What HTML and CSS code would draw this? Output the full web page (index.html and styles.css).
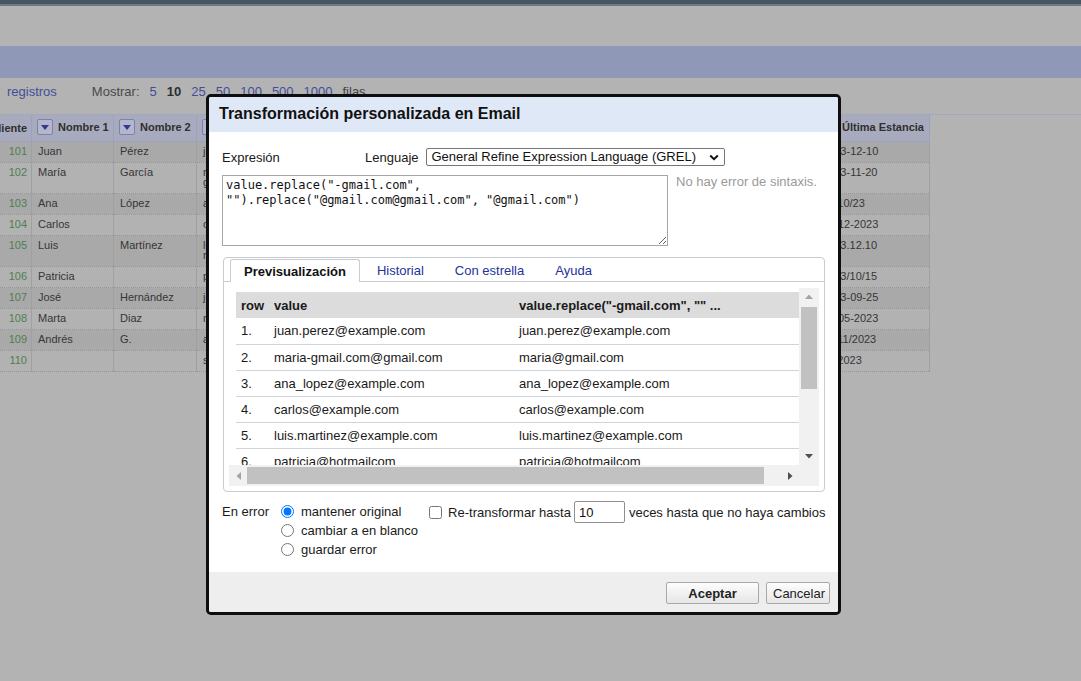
FILE: index.html
```html
<!DOCTYPE html>
<html lang="es">
<head>
<meta charset="utf-8">
<title>OpenRefine - Transformación personalizada</title>
<link rel="stylesheet" href="styles.css">
</head>
<body>
<div class="page">
  <div class="topbar"></div>
  <div class="appbar"></div>
  <div class="band"></div>
  <div class="controls">
    <a class="lnk">registros</a>
    <span class="show">Mostrar:</span>
    <a class="lnk pg">5</a>
    <b class="pg cur">10</b>
    <a class="lnk pg">25</a>
    <a class="lnk pg">50</a>
    <a class="lnk pg">100</a>
    <a class="lnk pg">500</a>
    <a class="lnk pg">1000</a>
    <span class="pg plain">filas</span>
  </div>
  <div class="grid-wrap">
    <table class="data">
      <colgroup>
        <col class="c-id"><col class="c-n1"><col class="c-n2"><col class="c-em"><col class="c-e"><col class="c-f"><col class="c-g">
      </colgroup>
      <thead>
        <tr>
          <th class="num-h">ID Cliente</th>
          <th><span class="dd"><svg width="16" height="16" viewBox="0 0 16 16"><polygon points="4,6 12,6 8,11" fill="#333a8e"/></svg></span>Nombre 1</th>
          <th><span class="dd"><svg width="16" height="16" viewBox="0 0 16 16"><polygon points="4,6 12,6 8,11" fill="#333a8e"/></svg></span>Nombre 2</th>
          <th><span class="dd"><svg width="16" height="16" viewBox="0 0 16 16"><polygon points="4,6 12,6 8,11" fill="#333a8e"/></svg></span>Email</th>
          <th><span class="dd"><svg width="16" height="16" viewBox="0 0 16 16"><polygon points="4,6 12,6 8,11" fill="#333a8e"/></svg></span>Teléfono</th>
          <th><span class="dd"><svg width="16" height="16" viewBox="0 0 16 16"><polygon points="4,6 12,6 8,11" fill="#333a8e"/></svg></span>Ciudad</th>
          <th><span class="dd"><svg width="16" height="16" viewBox="0 0 16 16"><polygon points="4,6 12,6 8,11" fill="#333a8e"/></svg></span>Última Estancia</th>
        </tr>
      </thead>
      <tbody>
        <tr class="odd"><td class="num">101</td><td>Juan</td><td>Pérez</td><td>juan.perez@example.com</td><td>555-1234</td><td>Madrid</td><td>2023-12-10</td></tr>
        <tr class="even"><td class="num">102</td><td>María</td><td>García</td><td>maria-gmail.com<br>gmail.com</td><td>555-2345</td><td>Sevilla</td><td>2023-11-20</td></tr>
        <tr class="odd"><td class="num">103</td><td>Ana</td><td>López</td><td>ana_lopez@example.com</td><td>555-3456</td><td>Valencia</td><td>23/10/23</td></tr>
        <tr class="even"><td class="num">104</td><td>Carlos</td><td></td><td>carlos@example.com</td><td>555-4567</td><td>Bilbao</td><td>12-12-2023</td></tr>
        <tr class="odd"><td class="num">105</td><td>Luis</td><td>Martínez</td><td>luis.<br>martinez@example.com</td><td>555-5678</td><td>Málaga</td><td>2023.12.10</td></tr>
        <tr class="even"><td class="num">106</td><td>Patricia</td><td></td><td>patricia@hotmailcom</td><td>555-6789</td><td>Zaragoza</td><td>2023/10/15</td></tr>
        <tr class="odd"><td class="num">107</td><td>José</td><td>Hernández</td><td>jose.hernandez@example.com</td><td>555-7890</td><td>Murcia</td><td>2023-09-25</td></tr>
        <tr class="even"><td class="num">108</td><td>Marta</td><td>Diaz</td><td>marta.diaz@example.com</td><td>555-8901</td><td>Cádiz</td><td>15-05-2023</td></tr>
        <tr class="odd"><td class="num">109</td><td>Andrés</td><td>G.</td><td>andres.g@example.com</td><td>555-9012</td><td>Toledo</td><td>01/11/2023</td></tr>
        <tr class="even"><td class="num">110</td><td></td><td></td><td>sin-nombre@example.com</td><td></td><td></td><td>12/2023</td></tr>
      </tbody>
    </table>
  </div>
</div>

<div class="dialog" role="dialog">
  <div class="dlg-head">Transformación personalizada en Email</div>
  <div class="dlg-body">
    <div class="row1">
      <span class="lbl-expr">Expresión</span>
      <span class="lbl-lang">Lenguaje</span>
      <div class="select">
        <span>General Refine Expression Language (GREL)</span>
        <svg width="10" height="7" viewBox="0 0 10 7"><polyline points="1.2,1.5 5,5.2 8.8,1.5" fill="none" stroke="#111" stroke-width="2"/></svg>
      </div>
    </div>
    <div class="row2">
      <textarea class="expr" spellcheck="false">value.replace("-gmail.com", "").replace("@gmail.com@gmail.com", "@gmail.com")</textarea>
      <div class="status">No hay error de sintaxis.</div>
    </div>
    <div class="tabs">
      <div class="tabnav">
        <span class="tab active">Previsualización</span>
        <span class="tab">Historial</span>
        <span class="tab">Con estrella</span>
        <span class="tab">Ayuda</span>
      </div>
      <div class="panel">
        <div class="scroller">
          <div class="view">
            <table class="ptable">
              <colgroup><col class="p-row"><col class="p-val"><col class="p-new"></colgroup>
              <thead>
                <tr><th>row</th><th>value</th><th>value.replace("-gmail.com", "" ...</th></tr>
              </thead>
              <tbody>
                <tr><td>1.</td><td>juan.perez@example.com</td><td>juan.perez@example.com</td></tr>
                <tr><td>2.</td><td>maria-gmail.com@gmail.com</td><td>maria@gmail.com</td></tr>
                <tr><td>3.</td><td>ana_lopez@example.com</td><td>ana_lopez@example.com</td></tr>
                <tr><td>4.</td><td>carlos@example.com</td><td>carlos@example.com</td></tr>
                <tr><td>5.</td><td>luis.martinez@example.com</td><td>luis.martinez@example.com</td></tr>
                <tr><td>6.</td><td>patricia@hotmailcom</td><td>patricia@hotmailcom</td></tr>
                <tr><td>7.</td><td>jose.hernandez@example.com</td><td>jose.hernandez@example.com</td></tr>
                <tr><td>8.</td><td>marta.diaz@example.com</td><td>marta.diaz@example.com</td></tr>
              </tbody>
            </table>
          </div>
          <div class="vbar">
            <div class="sb-btn"><svg width="8" height="5" viewBox="0 0 8 5"><polygon points="0,5 4,0.5 8,5" fill="#a3a3a3"/></svg></div>
            <div class="vtrack"><div class="vthumb"></div></div>
            <div class="sb-btn"><svg width="8" height="5" viewBox="0 0 8 5"><polygon points="0,0 8,0 4,4.5" fill="#505050"/></svg></div>
          </div>
          <div class="hbar">
            <div class="sb-btn"><svg width="5" height="8" viewBox="0 0 5 8"><polygon points="5,0 5,8 0.5,4" fill="#a3a3a3"/></svg></div>
            <div class="htrack"><div class="hthumb"></div></div>
            <div class="sb-btn"><svg width="5" height="8" viewBox="0 0 5 8"><polygon points="0,0 0,8 4.5,4" fill="#505050"/></svg></div>
          </div>
          <div class="corner"></div>
        </div>
      </div>
    </div>
    <div class="opts">
      <span class="lbl-err">En error</span>
      <div class="radios">
        <label><input type="radio" name="onerror" checked>mantener original</label>
        <label><input type="radio" name="onerror">cambiar a en blanco</label>
        <label><input type="radio" name="onerror">guardar error</label>
      </div>
      <div class="retrans">
        <input type="checkbox">
        <span>Re-transformar hasta</span>
        <input class="times" type="text" value="10">
        <span>veces hasta que no haya cambios</span>
      </div>
    </div>
  </div>
  <div class="dlg-foot">
    <button class="btn primary">Aceptar</button>
    <button class="btn cancel">Cancelar</button>
  </div>
</div>
</body>
</html>
```

FILE: styles.css
```css
* { box-sizing: border-box; }
html, body { margin: 0; padding: 0; }
body {
  width: 1081px;
  height: 681px;
  overflow: hidden;
  position: relative;
  background: #b3b3b3;
  font-family: "Liberation Sans", Arial, sans-serif;
  color: #333;
}

/* ---------- background page (dimmed) ---------- */
.topbar { height: 6px; background: #47565f; border-bottom: 2px solid #6d7b83; }
.appbar { height: 40px; }
.band { height: 32px; background: #8f99b7; }
.controls {
  height: 36px;
  padding: 6px 0 0 7px;
  font-size: 13px;
  line-height: 16px;
  display: flex;
  align-items: flex-start;
}
.lnk { color: #434e9a; text-decoration: none; }
.show { margin-left: 35px; color: #4a4a4a; }
.pg { margin-left: 10px; }
.pg.cur { font-weight: bold; color: #2e2e2e; }
.pg.plain { color: #444; }

.grid-wrap { overflow: hidden; border-top: 1px solid #a3a8c0; }
.data {
  border-collapse: collapse;
  table-layout: fixed;
  width: 961px;
  margin-left: -32px;
  font-size: 11px;
  color: #363636;
}
.c-id { width: 63px; }
.c-n1 { width: 82px; }
.c-n2 { width: 83px; }
.c-em { width: 210px; }
.c-e { width: 206px; }
.c-f { width: 203px; }
.c-g { width: 114px; }
.data th {
  height: 26px;
  padding: 0 5px;
  background: #a7abbd;
  border: 1px solid #9ca1bc;
  border-top: 0;
  text-align: left;
  font-weight: bold;
  white-space: nowrap;
  overflow: hidden;
  color: #2f2f2f;
}
.data th.num-h { text-align: right; padding-right: 4px; }
.dd {
  display: inline-block;
  width: 16px;
  height: 16px;
  vertical-align: middle;
  margin: -2px 5px 0 0;
  border: 1px solid #7c81ae;
  border-radius: 2px;
  background: #b4b7cb;
}
.dd svg { display: block; margin: -1px 0 0 -1px; }
.data td {
  padding: 4px 6px 6px;
  line-height: 10px;
  border-bottom: 1px dotted #959595;
  border-left: 1px solid #a0a0a0;
  border-right: 1px solid #a0a0a0;
  vertical-align: top;
  white-space: nowrap;
  overflow: hidden;
}
.data tr.odd td { background: #a9a9a9; }
.data tr.even td { background: #b2b2b2; }
.data td.num { text-align: right; padding-right: 4px; color: #4f7f4f; }

/* ---------- dialog ---------- */
.dialog {
  position: absolute;
  left: 206px;
  top: 94px;
  width: 635px;
  height: 521px;
  border: 3px solid #0e0e0e;
  border-radius: 5px;
  background: #fff;
  display: flex;
  flex-direction: column;
  overflow: hidden;
  color: #1a1a1a;
  font-size: 13px;
}
.dlg-head {
  height: 35px;
  flex: none;
  background: #dfe8f6;
  padding: 0 0 2px 10px;
  display: flex;
  align-items: center;
  font-size: 16px;
  font-weight: bold;
  color: #111;
}
.dlg-body { flex: 1; padding: 16px 13px 0; }

.row1 { display: flex; align-items: center; height: 18px; white-space: nowrap; }
.lbl-expr { width: 143px; flex: none; }
.lbl-lang { margin-right: 7px; }
.select {
  width: 299px;
  height: 18px;
  flex: none;
  border: 1px solid #767676;
  border-radius: 2px;
  display: flex;
  align-items: center;
  justify-content: space-between;
  padding: 0 5px;
  line-height: 16px;
  color: #111;
}

.row2 { display: flex; gap: 8px; margin-top: 9px; }
.expr {
  width: 446px;
  height: 71px;
  flex: none;
  margin: 0;
  font-family: "DejaVu Sans Mono", "Liberation Mono", monospace;
  font-size: 12px;
  line-height: 15px;
  padding: 2px 3px;
  border: 1px solid #a6a6a6;
  border-radius: 0;
  color: #111;
  resize: both;
}
.status { color: #9a9a9a; line-height: 14px; white-space: nowrap; }

.tabs {
  margin: 11px 0 0 1px;
  width: 602px;
  height: 235px;
  border: 1px solid #c8cbd0;
  border-radius: 4px;
  display: flex;
  flex-direction: column;
}
.tabnav {
  display: flex;
  align-items: flex-start;
  height: 24px;
  padding: 1px 0 0 6px;
  border-bottom: 1px solid #c8cbd0;
  flex: none;
  white-space: nowrap;
}
.tab {
  height: 22px;
  padding: 0 13px;
  margin-right: 3px;
  display: flex;
  align-items: center;
  color: #22339a;
  border: 1px solid transparent;
  border-bottom: 0;
  border-radius: 3px 3px 0 0;
}
.tab.active {
  height: 23px;
  margin-bottom: -1px;
  border-color: #c8cbd0;
  background: #fff;
  font-weight: bold;
  color: #111;
}
.panel { flex: 1; padding: 6px 5px 5px; }
.scroller {
  display: grid;
  grid-template-columns: 570px 20px;
  grid-template-rows: 177px 21px;
  height: 198px;
}
.view { overflow: hidden; padding: 4px 0 0 7px; }
.ptable {
  border-collapse: collapse;
  table-layout: fixed;
  width: 600px;
  color: #1a1a1a;
}
.p-row { width: 33px; }
.p-val { width: 245px; }
.p-new { width: 322px; }
.ptable th {
  height: 26px;
  padding: 0 5px;
  background: #dcdcdc;
  text-align: left;
  font-weight: bold;
  white-space: nowrap;
  overflow: hidden;
}
.ptable td {
  height: 26px;
  padding: 0 5px;
  border-bottom: 1px solid #cfd3da;
  white-space: nowrap;
  overflow: hidden;
}
.vbar { background: #f1f1f1; display: flex; flex-direction: column; }
.sb-btn { height: 17px; flex: none; display: flex; align-items: center; justify-content: center; }
.sb-btn svg { display: block; }
.vtrack { flex: 1; padding: 2px 2px; }
.vthumb { height: 82px; background: #c1c1c1; }
.hbar { background: #f1f1f1; display: flex; }
.hbar .sb-btn { width: 18px; height: auto; }
.htrack { flex: 1; padding: 2px 0; }
.hthumb { width: 517px; height: 100%; background: #c1c1c1; }
.corner { background: #f1f1f1; }

.opts { display: flex; align-items: flex-start; margin-top: 10px; white-space: nowrap; }
.lbl-err { width: 59px; flex: none; line-height: 19px; }
.radios { display: flex; flex-direction: column; flex: none; }
.radios label { display: flex; align-items: center; height: 19px; gap: 7px; }
.radios input { margin: 0; width: 13px; height: 13px; flex: none; }
.retrans { display: flex; align-items: center; flex: none; height: 22px; margin: -1px 0 0 11px; }
.retrans input[type="checkbox"] { margin: 0 6px 0 0; width: 13px; height: 13px; flex: none; }
.times {
  width: 51px;
  height: 22px;
  flex: none;
  margin: 0 4px 0 3px;
  border: 1px solid #8f8f8f;
  border-radius: 2px;
  padding: 0 4px;
  font: 13px "Liberation Sans", Arial, sans-serif;
  color: #111;
}

.dlg-foot {
  height: 40px;
  flex: none;
  background: #eeeeee;
  display: flex;
  justify-content: flex-end;
  align-items: flex-start;
  gap: 7px;
  padding: 10px 8px 0;
}
.btn {
  height: 22px;
  border: 1px solid #a9a9a9;
  border-radius: 2px;
  background: linear-gradient(#fdfdfd, #e6e6e6);
  font: 13px "Liberation Sans", Arial, sans-serif;
  color: #222;
  padding: 0 6px;
}
.btn.primary { width: 93px; font-weight: bold; }
.btn.cancel { width: 64px; }
```
